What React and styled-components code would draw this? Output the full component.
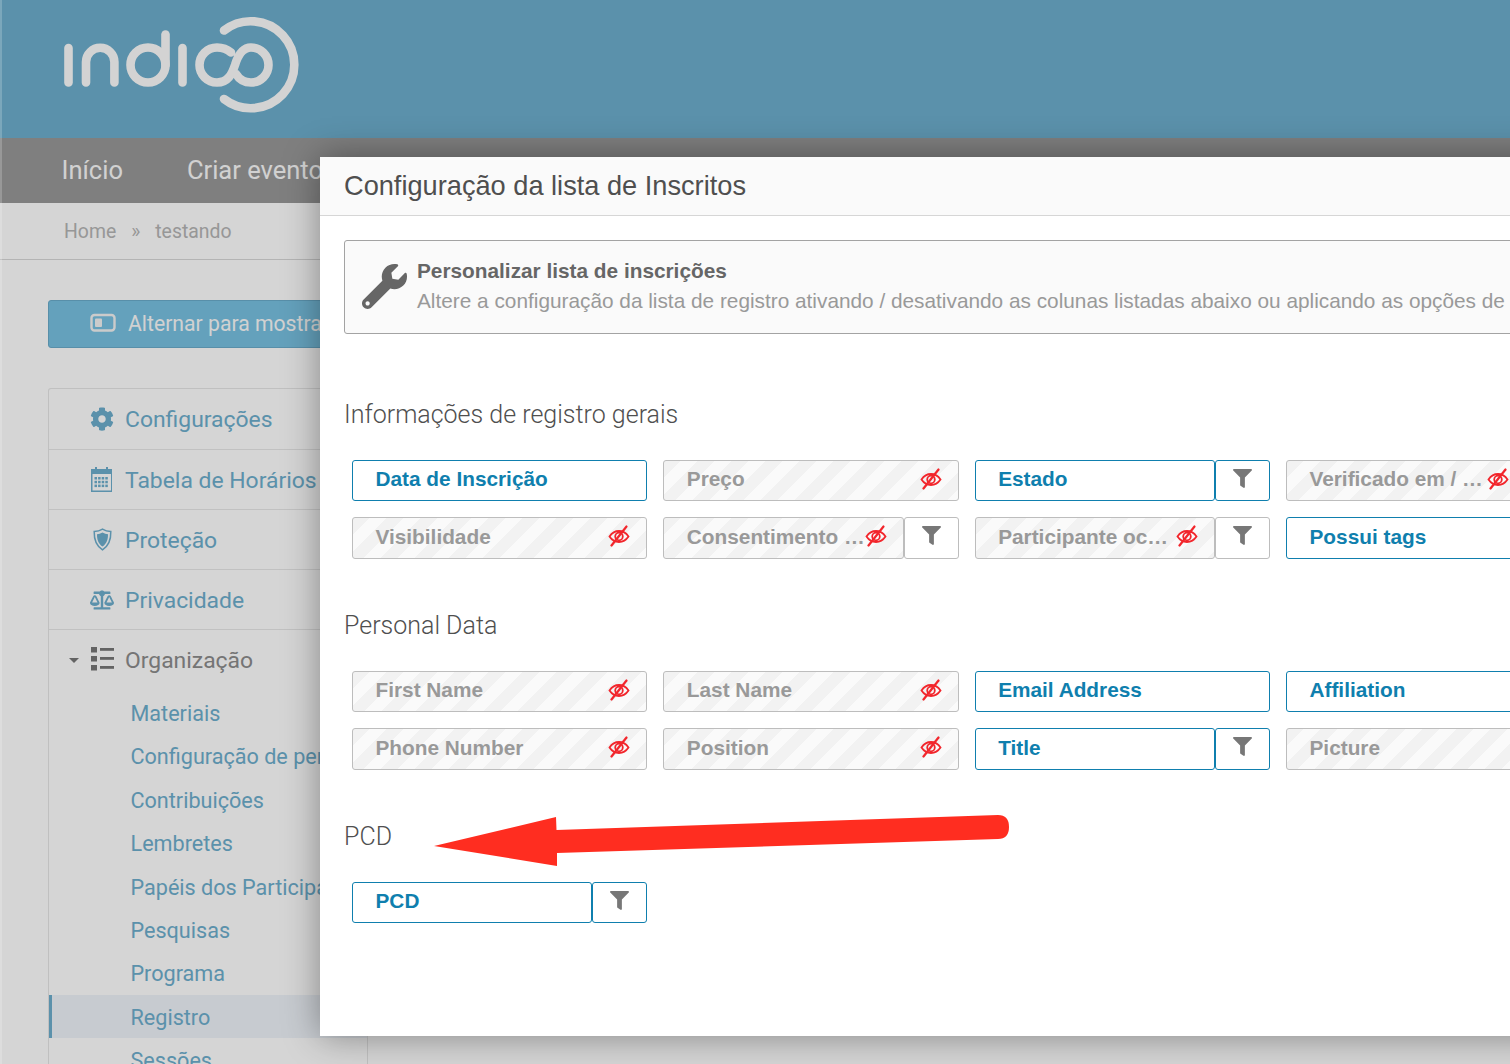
import React from "react";
import styled, { createGlobalStyle } from "styled-components";
import { FaCog, FaBalanceScale, FaWrench, FaFilter } from "react-icons/fa";

const GlobalStyle = createGlobalStyle`
    html, body {
        margin: 0;
        padding: 0;
        background: #fff;
    }
    body {
        font-family: "Roboto", "Liberation Sans", sans-serif;
    }
`;

const Page = styled.div`
    position: relative;
    width: 1510px;
    height: 1064px;
    overflow: hidden;
    background: #fff;
`;

// 배경 페이지
const Header = styled.header`
    height: 138px;
    background: #6daecd;
    padding-left: 60px;
    display: flex;
    align-items: flex-start;
    svg {
        display: block;
    }
`;

const Nav = styled.nav`
    height: 65px;
    box-sizing: border-box;
    background: #999;
    display: flex;
    align-items: center;
    gap: 64px;
    padding: 0 0 2px 61.5px;
    color: #fbfbfb;
    font-size: 25.5px;
`;

const Breadcrumb = styled.div`
    height: 56px;
    border-bottom: 1px solid #d8d8d8;
    display: flex;
    align-items: center;
    padding-left: 64px;
    color: #b5b5b5;
    font-size: 19.4px;
    span {
        margin-right: 15px;
    }
`;

const Content = styled.div`
    padding: 40px 0 0 48px;
`;

const SwitchButton = styled.div`
    width: 400px;
    height: 48px;
    box-sizing: border-box;
    background: #78c1e2;
    border: 1px solid #6aaccb;
    border-radius: 3px;
    display: flex;
    align-items: center;
    padding: 0 0 2px 41px;
    gap: 12px;
    color: #fbfbfb;
    font-size: 21.2px;
    white-space: nowrap;
`;

const Sidebar = styled.div`
    width: 320px;
    box-sizing: border-box;
    margin-top: 40px;
    border: 1px solid #e6e6e6;
    border-bottom: 0;
    border-radius: 3px 3px 0 0;
`;

const MenuRow = styled.div`
    height: ${(p) => p.$h}px;
    box-sizing: border-box;
    border-bottom: 1px solid ${(p) => (p.$last ? "transparent" : "#e8e8e8")};
    display: flex;
    align-items: center;
    padding-left: 41px;
    padding-top: 2px;
    padding-bottom: ${(p) => (p.$last ? 2 : 0)}px;
    color: ${(p) => (p.$muted ? "#8c8c8c" : "#6daecd")};
    font-size: 22.9px;
    position: relative;
`;

const MenuIcon = styled.span`
    width: 35px;
    flex: none;
    display: flex;
    align-items: center;
    margin-top: -2px;
`;

const Caret = styled.span`
    position: absolute;
    left: 20px;
    top: 28px;
    border-left: 5.5px solid transparent;
    border-right: 5.5px solid transparent;
    border-top: 5.5px solid #777;
`;

const SubItem = styled.div`
    height: 43.4px;
    box-sizing: border-box;
    display: flex;
    align-items: center;
    padding-top: 1.5px;
    padding-left: ${(p) => (p.$active ? 78.5 : 81.5)}px;
    color: #6daecd;
    font-size: 21.6px;
    white-space: nowrap;
    background: ${(p) => (p.$active ? "#eff3f9" : "transparent")};
    border-left: ${(p) => (p.$active ? "3px solid #6daecd" : "0")};
`;

// 어두운 막
const Dimmer = styled.div`
    position: absolute;
    inset: 0;
    box-sizing: border-box;
    background: rgba(0, 0, 0, 0.165);
    border-left: 2px solid rgba(255, 255, 255, 0.2);
`;

// 모달
const Modal = styled.section`
    position: absolute;
    left: 320px;
    top: 157px;
    width: 1300px;
    height: 879px;
    background: #fff;
    box-shadow: 0 0 34px rgba(0, 0, 0, 0.38);
    font-family: "Liberation Sans", Arial, sans-serif;
`;

const ModalTitle = styled.h1`
    margin: 0;
    height: 58px;
    box-sizing: content-box;
    background: #fafafa;
    border-bottom: 1px solid #d6d6d6;
    padding-left: 24px;
    display: flex;
    align-items: center;
    font-size: 27.2px;
    font-weight: 400;
    color: #4f4f4f;
`;

const ModalBody = styled.div`
    padding: 24px;
`;

const InfoBox = styled.div`
    height: 94px;
    box-sizing: border-box;
    background: #fafafa;
    border: 1px solid #a3a3a3;
    border-radius: 3px;
    display: flex;
    align-items: center;
    padding: 0 0 2px 17px;
    gap: 10px;
    color: #666;
    svg {
        flex: none;
    }
`;

const InfoTitle = styled.div`
    font-size: 20.8px;
    font-weight: 700;
    line-height: 30px;
    color: #666;
`;

const InfoText = styled.div`
    font-size: 20.8px;
    line-height: 30px;
    color: #999;
    white-space: nowrap;
`;

const SectionTitle = styled.h2`
    margin: ${(p) => (p.$first ? 62 : 48)}px 0 28px;
    height: 36px;
    line-height: 37px;
    font-family: "Roboto", "Liberation Sans", sans-serif;
    font-size: 25px;
    font-weight: 300;
    color: #4f4f4f;
`;

const FieldGrid = styled.div`
    display: grid;
    grid-template-columns: repeat(4, 295.33px);
    grid-auto-rows: 41px 42px;
    gap: 16px;
    padding-left: 8px;
`;

const Field = styled.div`
    display: flex;
    min-width: 0;
`;

const FieldLabel = styled.div`
    flex: 1;
    min-width: 0;
    box-sizing: border-box;
    display: flex;
    align-items: center;
    justify-content: space-between;
    padding: 0 16px 3px 22.5px;
    border: 1px solid ${(p) => (p.$on ? "#0f7fae" : "#bdbdbd")};
    border-radius: 3px;
    font-size: 20.8px;
    font-weight: 700;
    white-space: nowrap;
    color: ${(p) => (p.$on ? "#0f7fae" : "#999")};
    background: ${(p) =>
        p.$on
            ? "#fff"
            : "repeating-linear-gradient(135deg, #f2f2f2 0 12px, #fafafa 12px 24px)"};
`;

const FilterButton = styled.div`
    width: 55px;
    flex: none;
    box-sizing: border-box;
    display: flex;
    justify-content: center;
    padding-top: 8px;
    background: #fff;
    color: #777;
    border: 1px solid ${(p) => (p.$on ? "#0f7fae" : "#bdbdbd")};
    border-radius: 3px;
`;

const ArrowMark = styled.svg`
    position: absolute;
    left: 0;
    top: 0;
    pointer-events: none;
`;

const Logo = () => (
    <svg width="250" height="130" viewBox="60 0 250 130" fill="none" stroke="#fdfdfd" strokeWidth="8.6" strokeLinecap="round">
        <path d="M68.5 48V82.5" />
        <path d="M86 82.5V62a14.2 14.2 0 0 1 28.4 0V82.5" />
        <circle cx="148" cy="65" r="17.5" />
        <path d="M165.5 34.5V65" />
        <path d="M182.5 48V82.5" />
        <path d="M231 52.5C227 49 222.500 47.500 217 47.500a17.500 17.500 0 0 0 0 35C228 82.500 232 74 235 65C238 55 243 47.500 251 47.500a17.500 17.500 0 0 1 0 35C244 82.500 239 79 236 74" />
        <path d="M224 30.5A43.5 43.5 0 1 1 224 99" />
    </svg>
);

const ToggleIcon = () => (
    <svg width="26" height="20" viewBox="0 0 26 20">
        <rect x="1.5" y="2" width="23" height="15.5" rx="3" fill="none" stroke="#f4f4f4" strokeWidth="2.4" />
        <rect x="5" y="5.5" width="7" height="8.5" rx="1" fill="#f4f4f4" />
    </svg>
);

const CalendarIcon = () => (
    <svg width="23" height="25" viewBox="0 0 23 25" fill="#6daecd">
        <path d="M1 2h4V0h2v2h9V0h2v2h4v23H1zM2.5 7v16.500h18.500V7z" fillRule="evenodd" />
        {[0, 1, 2, 3].map((c) =>
            [0, 1, 2].map((r) => (
                <rect key={`${c}-${r}`} x={4.5 + c * 3.6} y={10 + r * 3.8} width="2.500" height="2.500" />
            ))
        )}
    </svg>
);

const ShieldIcon = () => (
    <svg width="24" height="23" viewBox="-3 0 24 23">
        <path d="M9.500 1.200C12 2.800 15 3.500 17.800 3.500C18 11 16.500 17.500 9.500 21.800C2.500 17.500 1 11 1.200 3.500C4 3.500 7 2.800 9.500 1.200Z" fill="none" stroke="#6daecd" strokeWidth="1.500" />
        <path d="M9.500 4.500C11.300 5.500 13.200 6 15 6.200C15 11.500 13.800 15.500 9.500 18.500C5.200 15.500 4 11.500 4 6.200C5.800 6 7.700 5.500 9.500 4.500Z" fill="#6daecd" />
    </svg>
);

const ListIcon = () => (
    <svg width="24" height="24" viewBox="0 0 24 24" fill="#777">
        <rect x="1" y="0" width="6" height="5.500" />
        <rect x="1" y="9" width="6" height="5.500" />
        <rect x="1" y="18" width="6" height="5.500" />
        <rect x="10" y="1" width="14" height="2.800" />
        <rect x="10" y="10" width="14" height="2.800" />
        <rect x="10" y="19" width="14" height="2.800" />
    </svg>
);

const EyeSlash = styled.svg`
    flex: none;
    margin-top: -1px;
`;

const EyeOff = () => (
    <EyeSlash width="22" height="22" viewBox="0 0 22 22" fill="none" stroke="#f2262c" strokeLinecap="round">
        <path d="M1.500 11.500C4 7.800 7.300 6 11 6s7 1.800 9.500 5.500C18 15.200 14.700 17 11 17S4 15.200 1.500 11.500Z" strokeWidth="1.800" />
        <circle cx="11" cy="11.500" r="3.800" strokeWidth="1.800" />
        <path d="M18.500 1.500L3.500 20.500" strokeWidth="2.200" />
    </EyeSlash>
);

function Column({ label, on, filter }) {
    return (
        <Field>
            <FieldLabel $on={on}>
                {label}
                {!on && <EyeOff />}
            </FieldLabel>
            {filter && (
                <FilterButton $on={on}>
                    <FaFilter size={19} />
                </FilterButton>
            )}
        </Field>
    );
}

const subItems = [
    "Materiais",
    "Configuração de perfil",
    "Contribuições",
    "Lembretes",
    "Papéis dos Participantes",
    "Pesquisas",
    "Programa",
    "Registro",
    "Sessões",
];

function App() {
    return (
        <Page>
            <GlobalStyle />
            <Header>
                <Logo />
            </Header>
            <Nav>
                <div>Início</div>
                <div>Criar evento</div>
            </Nav>
            <Breadcrumb>
                <span>Home</span>
                <span>»</span>
                <span>testando</span>
            </Breadcrumb>
            <Content>
                <SwitchButton>
                    <ToggleIcon />
                    Alternar para mostrar
                </SwitchButton>
                <Sidebar>
                    <MenuRow $h={60.5}>
                        <MenuIcon>
                            <FaCog size={24} color="#6daecd" />
                        </MenuIcon>
                        Configurações
                    </MenuRow>
                    <MenuRow $h={60.5}>
                        <MenuIcon>
                            <CalendarIcon />
                        </MenuIcon>
                        Tabela de Horários
                    </MenuRow>
                    <MenuRow $h={60}>
                        <MenuIcon>
                            <ShieldIcon />
                        </MenuIcon>
                        Proteção
                    </MenuRow>
                    <MenuRow $h={60}>
                        <MenuIcon>
                            <FaBalanceScale size={24} color="#6daecd" />
                        </MenuIcon>
                        Privacidade
                    </MenuRow>
                    <MenuRow $h={61} $muted $last>
                        <Caret />
                        <MenuIcon>
                            <ListIcon />
                        </MenuIcon>
                        Organização
                    </MenuRow>
                    {subItems.map((item) => (
                        <SubItem key={item} $active={item === "Registro"}>
                            {item}
                        </SubItem>
                    ))}
                </Sidebar>
            </Content>

            <Dimmer />

            <Modal>
                <ModalTitle>Configuração da lista de Inscritos</ModalTitle>
                <ModalBody>
                    <InfoBox>
                        <FaWrench size={45} color="#666" />
                        <div>
                            <InfoTitle>Personalizar lista de inscrições</InfoTitle>
                            <InfoText>
                                Altere a configuração da lista de registro ativando / desativando as colunas listadas abaixo ou aplicando as opções de
                            </InfoText>
                        </div>
                    </InfoBox>

                    <SectionTitle $first>Informações de registro gerais</SectionTitle>
                    <FieldGrid>
                        <Column label="Data de Inscrição" on />
                        <Column label="Preço" />
                        <Column label="Estado" on filter />
                        <Column label="Verificado em / …" filter />
                        <Column label="Visibilidade" />
                        <Column label="Consentimento …" filter />
                        <Column label="Participante oc…" filter />
                        <Column label="Possui tags" on />
                    </FieldGrid>

                    <SectionTitle>Personal Data</SectionTitle>
                    <FieldGrid>
                        <Column label="First Name" />
                        <Column label="Last Name" />
                        <Column label="Email Address" on />
                        <Column label="Affiliation" on />
                        <Column label="Phone Number" />
                        <Column label="Position" />
                        <Column label="Title" on filter />
                        <Column label="Picture" />
                    </FieldGrid>

                    <SectionTitle>PCD</SectionTitle>
                    <FieldGrid>
                        <Column label="PCD" on filter />
                    </FieldGrid>
                </ModalBody>
            </Modal>

            <ArrowMark width="1510" height="1064" viewBox="0 0 1510 1064">
                <path
                    d="M434 846L556 817L556.500 830L998 815Q1009 815 1009 827Q1009 839 998 839L557 853L557 866Z"
                    fill="#ff2d20"
                />
            </ArrowMark>
        </Page>
    );
}

export default App;
